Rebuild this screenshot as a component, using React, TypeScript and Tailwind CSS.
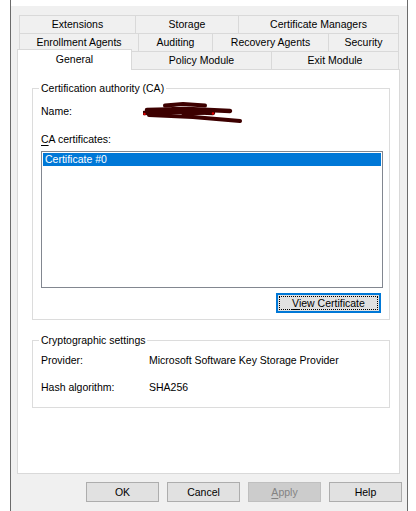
import React from "react";

// Tab rows of the property sheet, back row first
const tabRows = [
  [
    { label: "Extensions", w: "w-[116px]" },
    { label: "Storage", w: "w-[103px]" },
    { label: "Certificate Managers", w: "w-[161px] border-r" },
  ],
  [
    { label: "Enrollment Agents", w: "w-[119px]" },
    { label: "Auditing", w: "w-[74px]" },
    { label: "Recovery Agents", w: "w-[116px]" },
    { label: "Security", w: "w-[71px] border-r" },
  ],
];

const Redaction = () => (
  <svg width="100" height="22" viewBox="0 0 100 22" className="-my-[5px]" fill="none">
    <g stroke="#3d0000" strokeLinecap="round" strokeLinejoin="round">
      <path d="M22 4.5 L40 3 L62 4.5" strokeWidth={4} />
      <path d="M4 9 L45 8 L87 10" strokeWidth={4.5} />
      <path d="M1 12 L35 10.5 L70 12" strokeWidth={4.5} />
      <path d="M6 14 L50 16 L97 20" strokeWidth={4} />
      <path d="M30 7 L60 12 L40 14" strokeWidth={3} />
    </g>
    <circle cx="1.5" cy="13" r="1.2" fill="#e00000" />
    <circle cx="70" cy="12.5" r="1.2" fill="#e00000" />
  </svg>
);

const DialogButton = ({ children, disabled }: { children: React.ReactNode; disabled?: boolean }) => (
  <div
    className={
      disabled
        ? "w-[73px] h-[20px] flex items-center justify-center border border-[#bfbfbf] bg-[#cccccc] text-[#838383]"
        : "w-[73px] h-[20px] flex items-center justify-center border border-[#adadad] bg-[#e1e1e1]"
    }
  >
    {children}
  </div>
);

export default function App() {
  return (
    <div className="w-[416px] h-[511px] bg-white font-['Liberation_Sans',Arial,sans-serif] text-[10.5px] leading-[13px] text-black overflow-hidden">
      <div className="ml-[10px] w-[398px] h-full border-x border-[#6b6b6b] flex flex-col">
        <div className="h-[6px] bg-white" />
        <div className="flex-1 bg-[#f0f0f0] flex flex-col">
          {/* Tabs */}
          <div className="mt-[9px] ml-[8px] flex flex-col">
            {tabRows.map((row, i) => (
              <div key={i} className="flex h-[18px]">
                {row.map((t) => (
                  <div
                    key={t.label}
                    className={`${t.w} h-[18px] border-l border-t border-[#d9d9d9] flex items-center justify-center`}
                  >
                    {t.label}
                  </div>
                ))}
              </div>
            ))}
            <div className="flex h-[18px] items-start">
              <div className="relative z-10 -ml-[2px] -mt-[2px] w-[115px] h-[21px] bg-white border-l border-t border-r border-[#d9d9d9] flex items-center justify-center pb-[1px]">
                General
              </div>
              <div className="-ml-px w-[140px] h-[18px] border-l border-t border-[#d9d9d9] flex items-center justify-center">
                Policy Module
              </div>
              <div className="w-[128px] h-[18px] border-l border-t border-r border-[#d9d9d9] flex items-center justify-center">
                Exit Module
              </div>
            </div>
          </div>

          {/* Tab page */}
          <div className="ml-[6px] w-[383px] h-[405px] bg-white border border-[#d9d9d9] flex flex-col pl-[14px]">
            {/* Certification authority */}
            <div className="relative mt-[18px] w-[358px] h-[232px] border border-[#dcdcdc] pl-[8px] flex flex-col">
              <span className="absolute -top-[7px] left-[6px] bg-white px-[2px]">Certification authority (CA)</span>
              <div className="mt-[16px] flex items-center">
                <span className="w-[102px]">Name:</span>
                <Redaction />
              </div>
              <div className="mt-[15px]">
                <u className="underline-offset-[2px]">C</u>A certificates:
              </div>
              <div className="mt-[5px] w-[342px] h-[137px] border border-[#828790] p-px">
                <div className="h-[13px] bg-[#0078d7] text-white pl-[2px] flex items-center">Certificate #0</div>
              </div>
              <div className="mt-[5px] ml-[235px] w-[105px] h-[20px] border-2 border-[#0078d7] bg-[#e1e1e1] flex items-center justify-center outline outline-1 outline-dotted outline-black outline-offset-[-4px]">
                <span>
                  <u className="underline-offset-[2px]">V</u>iew Certificate
                </span>
              </div>
            </div>

            {/* Cryptographic settings */}
            <div className="relative mt-[20px] w-[358px] h-[68px] border border-[#dcdcdc] pl-[8px] flex flex-col">
              <span className="absolute -top-[7px] left-[6px] bg-white px-[2px]">Cryptographic settings</span>
              <div className="mt-[13px] flex">
                <span className="w-[108px]">Provider:</span>
                <span>Microsoft Software Key Storage Provider</span>
              </div>
              <div className="mt-[14px] flex">
                <span className="w-[108px]">Hash algorithm:</span>
                <span>SHA256</span>
              </div>
            </div>
          </div>

          {/* Dialog buttons */}
          <div className="mt-[8px] ml-[75px] flex gap-[8px]">
            <DialogButton>OK</DialogButton>
            <DialogButton>Cancel</DialogButton>
            <DialogButton disabled>
              <span>
                <u className="underline-offset-[2px]">A</u>pply
              </span>
            </DialogButton>
            <DialogButton>Help</DialogButton>
          </div>
        </div>
      </div>
    </div>
  );
}
